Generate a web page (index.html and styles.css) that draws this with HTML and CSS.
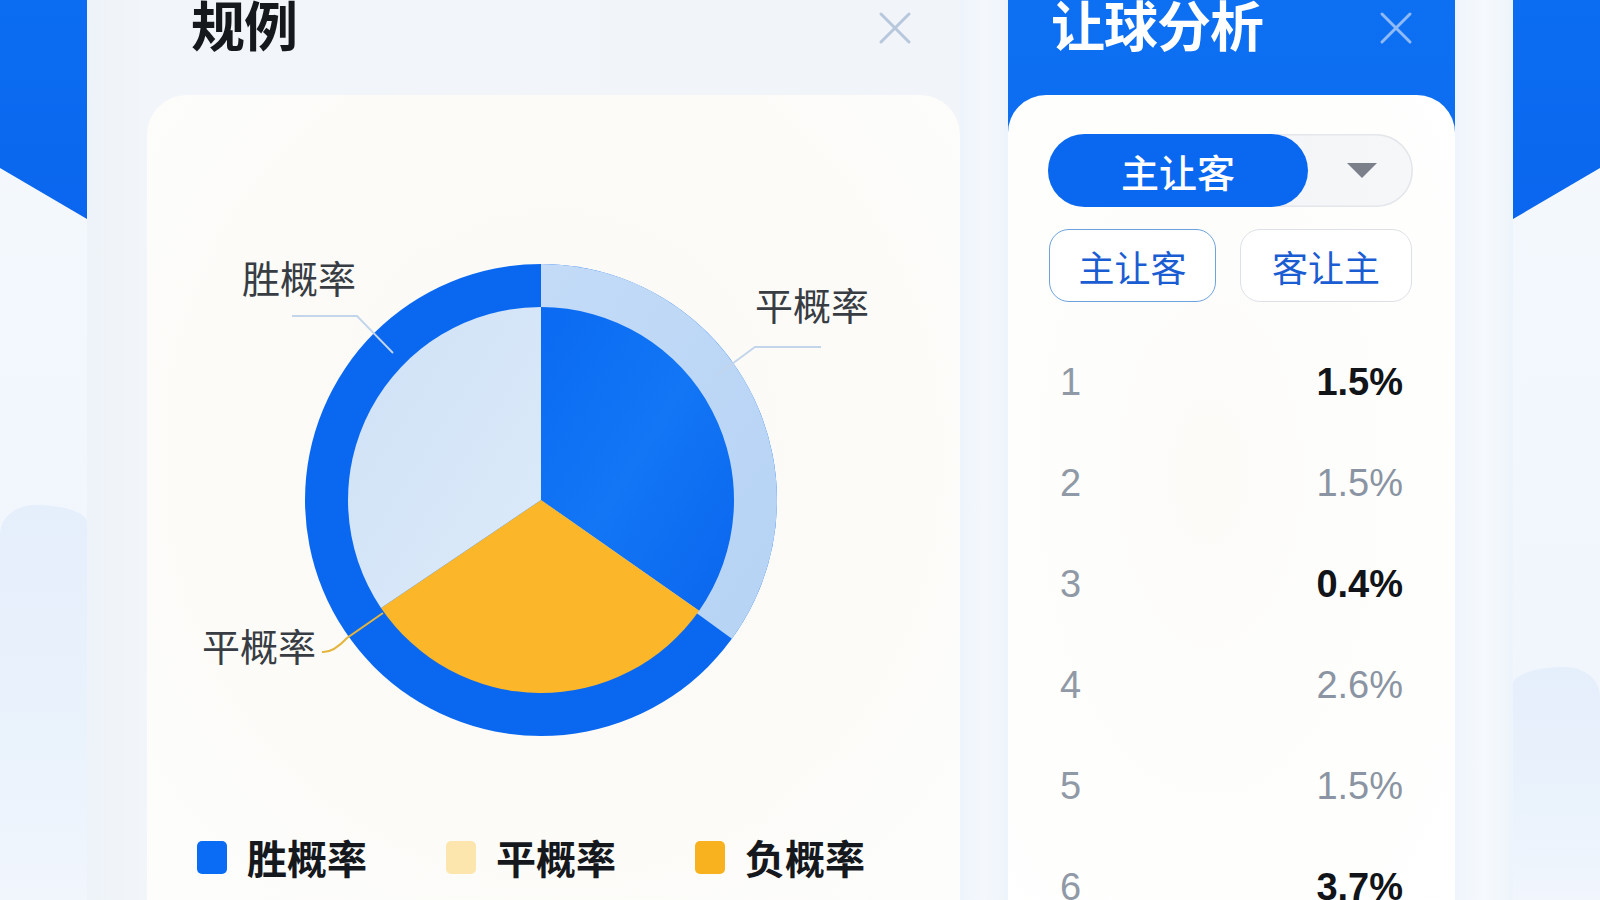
FILE: index.html
```html
<!DOCTYPE html>
<html lang="zh-CN">
<head>
<meta charset="utf-8">
<title>规例 · 让球分析</title>
<link rel="stylesheet" href="styles.css">
</head>
<body>
<div class="page">
  <div class="deco deco-left">
    <div class="deco-blue"></div>
    <div class="deco-hill"></div>
  </div>

  <section class="rules">
    <header class="panel-head">
      <h1 class="panel-title">规例</h1>
      <span class="close close-muted">
        <svg viewBox="0 0 34 34" width="34" height="34"><path d="M3 3L31 31M31 3L3 31"/></svg>
      </span>
    </header>
    <div class="rules-card">
      <svg class="chart" viewBox="0 0 813 730" width="813" height="730">
        <defs>
          <linearGradient id="gBlue" x1="0" y1="0" x2="1" y2="1">
            <stop offset="0" stop-color="#0a6af2"/>
            <stop offset="0.5" stop-color="#1276f5"/>
            <stop offset="1" stop-color="#0a66ee"/>
          </linearGradient>
          <linearGradient id="gPale" x1="0" y1="0" x2="1" y2="1">
            <stop offset="0" stop-color="#cfe1f6"/>
            <stop offset="1" stop-color="#dcebfa"/>
          </linearGradient>
          <linearGradient id="gRing" x1="0" y1="0" x2="1" y2="1">
            <stop offset="0" stop-color="#c3dbf7"/>
            <stop offset="1" stop-color="#b6d3f5"/>
          </linearGradient>
        </defs>
        <circle cx="394" cy="405" r="236" fill="#0a68f0"/>
        <path d="M394 405L394 169A236 236 0 0 1 584.9 543.7Z" fill="url(#gRing)"/>
        <path d="M394 405L394 212A193 193 0 0 1 552.1 515.7Z" fill="url(#gBlue)"/>
        <path d="M394 405L552.1 515.7A193 193 0 0 1 234 512.9Z" fill="#fbb62a"/>
        <path d="M394 405L234 512.9A193 193 0 0 1 394 212Z" fill="url(#gPale)"/>
        <path class="leader" d="M145 221L210 221L246 258"/>
        <path class="leader" d="M570 280L608 252L674 252"/>
        <path class="leader leader-gold" d="M175 557Q186 558 200 543L236 518"/>
        <text class="chart-label" x="95" y="198">胜概率</text>
        <text class="chart-label" x="608" y="225">平概率</text>
        <text class="chart-label" x="55" y="566">平概率</text>
      </svg>
      <ul class="legend">
        <li class="legend-item"><span class="swatch swatch-blue"></span>胜概率</li>
        <li class="legend-item"><span class="swatch swatch-pale"></span>平概率</li>
        <li class="legend-item"><span class="swatch swatch-gold"></span>负概率</li>
      </ul>
    </div>
  </section>

  <div class="gutter"></div>

  <section class="handicap">
    <header class="panel-head panel-head-blue">
      <h1 class="panel-title panel-title-light">让球分析</h1>
      <span class="close close-light">
        <svg viewBox="0 0 34 34" width="34" height="34"><path d="M3 3L31 31M31 3L3 31"/></svg>
      </span>
    </header>
    <div class="hc-card">
      <div class="select">
        <span class="select-value">主让客</span>
        <span class="select-caret"><span class="caret"></span></span>
      </div>
      <div class="toggle-row">
        <button class="opt opt-active">主让客</button>
        <button class="opt opt-second">客让主</button>
      </div>
      <ul class="rows">
        <li class="row"><span class="idx">1</span><span class="val val-strong">1.5%</span></li>
        <li class="row"><span class="idx">2</span><span class="val">1.5%</span></li>
        <li class="row"><span class="idx">3</span><span class="val val-strong">0.4%</span></li>
        <li class="row"><span class="idx">4</span><span class="val">2.6%</span></li>
        <li class="row"><span class="idx">5</span><span class="val">1.5%</span></li>
        <li class="row"><span class="idx">6</span><span class="val val-strong">3.7%</span></li>
      </ul>
    </div>
  </section>

  <div class="gutter gutter-right"></div>

  <div class="deco deco-right">
    <div class="deco-blue"></div>
    <div class="deco-hill"></div>
  </div>
</div>
</body>
</html>
```

FILE: styles.css
```css
* { box-sizing: border-box; }

html, body {
  margin: 0;
  padding: 0;
  width: 1600px;
  height: 900px;
  overflow: hidden;
}

.page {
  display: flex;
  width: 1600px;
  height: 900px;
  overflow: hidden;
  background: linear-gradient(180deg, #f4f8fd 0%, #eff5fc 100%);
  font-family: "Noto Sans CJK SC", "Noto Sans", sans-serif;
}

/* side decorations */
.deco {
  flex: none;
  width: 87px;
  display: flex;
  flex-direction: column;
  background: linear-gradient(180deg, #f5f9fe 0%, #eff5fc 100%);
}
.deco-blue {
  height: 219px;
  background: linear-gradient(180deg, #0b6df2 0%, #0a66ee 100%);
}
.deco-left .deco-blue { clip-path: polygon(0 0, 100% 0, 100% 100%, 0 168px); }
.deco-right .deco-blue { clip-path: polygon(0 0, 100% 0, 100% 168px, 0 100%); }
.deco-hill {
  margin-top: auto;
  background: linear-gradient(180deg, #e5eefb 0%, #eaf2fc 60%, #f1f6fd 100%);
}
.deco-left .deco-hill {
  height: 395px;
  border-radius: 60px 90px 0 0 / 50px 30px 0 0;
}
.deco-right .deco-hill {
  height: 233px;
  border-radius: 90px 60px 0 0 / 30px 50px 0 0;
}

.gutter {
  flex: none;
  width: 48px;
  background: linear-gradient(90deg, #eef4fb 0%, #f4f8fd 50%, #eef4fb 100%);
}
.gutter-right {
  width: 58px;
  background: linear-gradient(90deg, #eff5fc 0%, #f6f9fd 50%, #eef4fb 100%);
}

/* panels */
.panel-head {
  height: 95px;
  flex: none;
  display: flex;
  justify-content: space-between;
  align-items: flex-start;
}
.panel-title {
  margin: -3px 0 0;
  font-size: 54px;
  line-height: 54px;
  font-weight: 700;
  color: #15181d;
  letter-spacing: -1px;
}
.panel-title-light { color: #ffffff; }

.close {
  display: block;
  width: 34px;
  height: 34px;
  margin-top: 11px;
}
.close svg { display: block; }
.close path {
  fill: none;
  stroke-width: 3;
  stroke-linecap: round;
}
.close-muted path { stroke: #b7c7dc; }
.close-light path { stroke: #8fbaf6; }

.rules {
  flex: none;
  width: 873px;
  display: flex;
  flex-direction: column;
  background: linear-gradient(90deg, #eef3f9 0%, #f2f5f9 60px, #f1f4f8 100%);
}
.rules .panel-head { padding: 0 48px 0 104px; }

.rules-card {
  flex: 1;
  margin-left: 60px;
  border-radius: 40px 40px 0 0;
  background: radial-gradient(ellipse at 50% 45%, #fbf9f5 0%, #fcfbf8 55%, #fdfdfb 100%);
}
.chart { display: block; }
.leader {
  fill: none;
  stroke: #c2d5ea;
  stroke-width: 1.8;
}
.leader-gold { stroke: #e4b53b; stroke-width: 2; }
.chart-label {
  font-family: "Noto Sans CJK SC", sans-serif;
  font-size: 38px;
  fill: #383c43;
}

.legend {
  list-style: none;
  margin: 15px 0 0;
  padding: 0 0 0 50px;
  display: flex;
  gap: 79px;
}
.legend-item {
  display: flex;
  align-items: center;
  gap: 20px;
  height: 34px;
  font-size: 40px;
  font-weight: 700;
  color: #15181d;
}
.swatch {
  width: 30px;
  height: 33px;
  border-radius: 5px;
  flex: none;
}
.swatch-blue { background: #0a6cf5; }
.swatch-pale { background: #fde6ad; }
.swatch-gold { background: #f8b11f; }

/* handicap panel */
.handicap {
  flex: none;
  width: 447px;
  display: flex;
  flex-direction: column;
  background: linear-gradient(180deg, #0d6ff2 0%, #0a64ec 100%);
}
.handicap .panel-head { padding: 0 42px 0 43px; }

.hc-card {
  flex: 1;
  border-radius: 38px 38px 0 0;
  background: radial-gradient(ellipse at 45% 45%, #fcfbf8 0%, #fefefd 60%, #ffffff 100%);
  padding: 39px 42px 0 40px;
}

.select {
  display: flex;
  height: 73px;
  border-radius: 37px;
  background: linear-gradient(90deg, #f0f2f5 0%, #f6f7f9 100%);
  box-shadow: inset 0 0 0 1.5px #e3e6ea;
}
.select-value {
  flex: none;
  width: 260px;
  border-radius: 37px;
  background: #0a68f0;
  color: #ffffff;
  font-size: 38px;
  font-weight: 500;
  display: flex;
  align-items: center;
  justify-content: center;
}
.select-caret {
  flex: 1;
  display: flex;
  align-items: center;
  justify-content: center;
  padding-left: 2px;
}
.caret {
  width: 0;
  height: 0;
  border-left: 15px solid transparent;
  border-right: 15px solid transparent;
  border-top: 15px solid #7b808a;
}

.toggle-row {
  display: flex;
  gap: 24px;
  margin-top: 22px;
}
.opt {
  height: 73px;
  padding: 0;
  border-radius: 20px;
  background: #ffffff;
  border: 1.5px solid #dde1e6;
  color: #1a5cd2;
  font-family: "Noto Sans CJK SC", sans-serif;
  font-size: 36px;
  line-height: 1;
}
.opt-active {
  width: 167px;
  margin-left: 1px;
  border-color: #6ea2dc;
}
.opt-second { width: 172px; }

.rows {
  list-style: none;
  margin: 30px 0 0;
  padding: 0 10px 0 12px;
}
.row {
  height: 101px;
  display: flex;
  justify-content: space-between;
  align-items: center;
  font-family: "Liberation Sans", Arial, sans-serif;
  font-size: 38px;
}
.idx { color: #9099a6; }
.val { color: #8a94a2; }
.val-strong { color: #111418; font-weight: 700; }
```
